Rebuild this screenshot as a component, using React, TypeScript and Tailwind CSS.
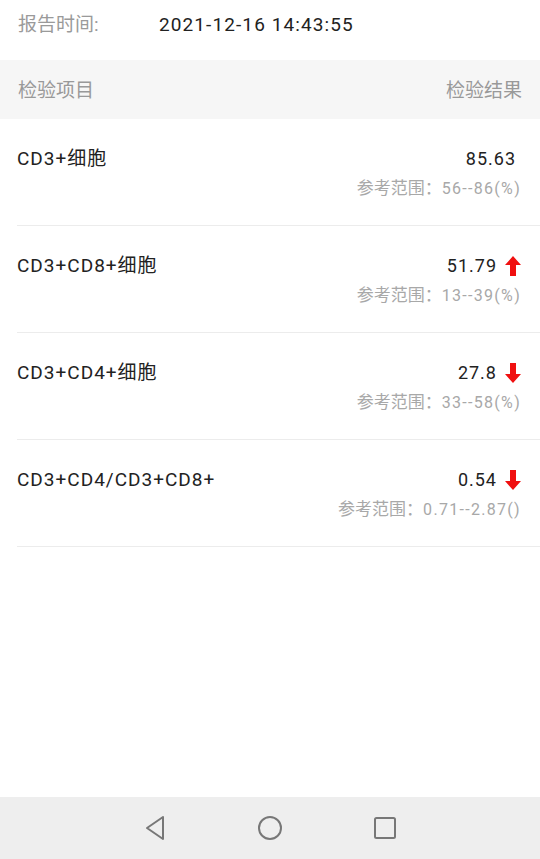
const rows = [
  { name: 'CD3+细胞', value: '85.63', range: '56--86(%)', flag: '' },
  { name: 'CD3+CD8+细胞', value: '51.79', range: '13--39(%)', flag: 'up' },
  { name: 'CD3+CD4+细胞', value: '27.8', range: '33--58(%)', flag: 'down' },
  { name: 'CD3+CD4/CD3+CD8+', value: '0.54', range: '0.71--2.87()', flag: 'down' },
];

function Arrow({ dir }: { dir: string }) {
  return (
    <svg width="16" height="20" viewBox="0 0 16 20" className={dir === 'down' ? 'rotate-180' : ''}>
      <path d="M8 0 L16 9 L11 9 L11 20 L5 20 L5 9 L0 9 Z" fill="#f01010" />
    </svg>
  );
}

export default function App() {
  return (
    <div
      className="w-[540px] h-[859px] bg-white flex flex-col"
      style={{ fontFamily: '"Roboto", "Noto Sans CJK SC", sans-serif' }}
    >
      <div className="h-[60px] flex items-start pt-[11px] px-[18px] text-[19px] leading-[28px]">
        <span className="text-[#9a9a9a] w-[141px]">报告时间:</span>
        <span className="text-[#222] tracking-[1.1px]">2021-12-16 14:43:55</span>
      </div>
      <div className="h-[59px] bg-[#f6f6f6] flex items-center justify-between px-[18px] pt-[3px] text-[19px] text-[#999]">
        <span>检验项目</span>
        <span>检验结果</span>
      </div>
      <div className="flex flex-col">
        {rows.map((r) => (
          <div key={r.name} className="ml-[17px] h-[107px] border-b border-[#ececec] flex justify-between pr-[19px] pt-[27px]">
            <span className="text-[19px] leading-[26px] text-[#222] tracking-[1px]">{r.name}</span>
            <div className="flex flex-col items-end">
              <div className={`flex items-center gap-[8px] text-[18px] leading-[26px] text-[#222] tracking-[1px] ${r.flag ? '' : 'pr-[5px]'}`}>
                <span>{r.value}</span>
                {r.flag && <Arrow dir={r.flag} />}
              </div>
              <span className="mt-[5px] text-[17px] leading-[22px] text-[#a8a8a8]">
                参考范围：<span className="text-[16px] tracking-[1.3px]">{r.range}</span>
              </span>
            </div>
          </div>
        ))}
      </div>
      <div className="flex-1" />
      <div className="h-[62px] bg-[#eeeeee] flex items-center justify-center gap-[90px]">
        <svg width="24" height="26" viewBox="0 0 24 26">
          <path d="M20 2 L4 13 L20 24 Z" fill="none" stroke="#777" strokeWidth="2" strokeLinejoin="round" />
        </svg>
        <svg width="26" height="26" viewBox="0 0 26 26">
          <circle cx="13" cy="13" r="11" fill="none" stroke="#777" strokeWidth="2" />
        </svg>
        <svg width="24" height="24" viewBox="0 0 24 24">
          <rect x="2" y="2" width="20" height="20" rx="1.5" fill="none" stroke="#777" strokeWidth="2" />
        </svg>
      </div>
    </div>
  );
}
